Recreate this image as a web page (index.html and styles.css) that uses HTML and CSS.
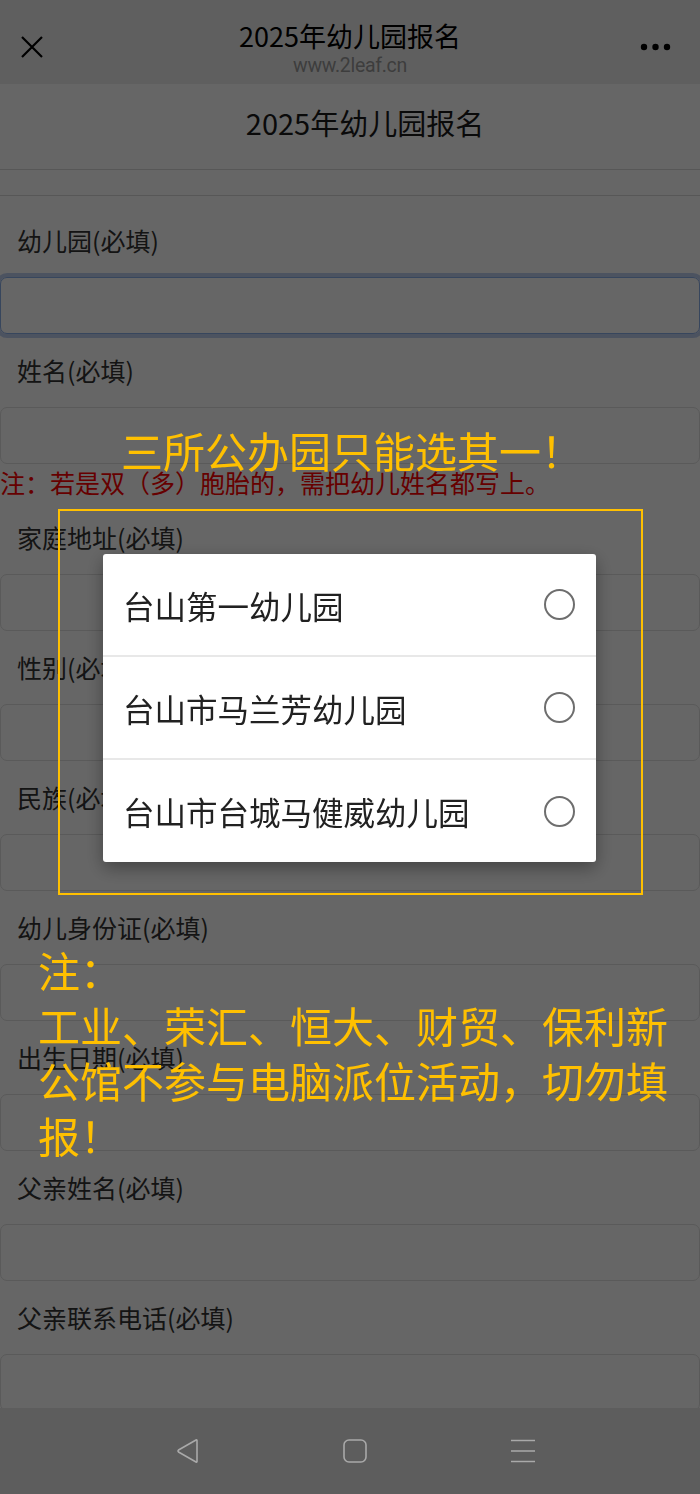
FILE: index.html
```html
<!DOCTYPE html>
<html lang="zh-CN">
<head>
    <meta charset="UTF-8">
    <meta name="viewport" content="width=device-width, initial-scale=1.0">
    <title>2025年幼儿园报名</title>
    <link rel="stylesheet" href="styles.css">
</head>
<body>
    <div class="topbar">
        <svg class="close-icon" width="24" height="24" viewBox="0 0 24 24">
            <path d="M2 2 L22 22 M22 2 L2 22" stroke="#000" stroke-width="2.2" fill="none"/>
        </svg>
        <div class="topbar-title">2025年幼儿园报名</div>
        <div class="topbar-url">www.2leaf.cn</div>
        <svg class="more-icon" width="32" height="8" viewBox="0 0 32 8">
            <circle cx="4" cy="4" r="3.2" fill="#000"/>
            <circle cx="15.5" cy="4" r="3.2" fill="#000"/>
            <circle cx="27" cy="4" r="3.2" fill="#000"/>
        </svg>
    </div>

    <div class="page-header">2025年幼儿园报名</div>
    <div class="header-gap"></div>

    <form class="signup-form">
        <div class="form-group">
            <label>幼儿园(必填)</label>
            <div class="input focused"></div>
        </div>
        <div class="form-group">
            <label>姓名(必填)</label>
            <div class="input"></div>
        </div>
        <p class="note">注：若是双（多）胞胎的，需把幼儿姓名都写上。</p>
        <div class="form-group">
            <label>家庭地址(必填)</label>
            <div class="input"></div>
        </div>
        <div class="form-group">
            <label>性别(必填)</label>
            <div class="input"></div>
        </div>
        <div class="form-group">
            <label>民族(必填)</label>
            <div class="input"></div>
        </div>
        <div class="form-group">
            <label>幼儿身份证(必填)</label>
            <div class="input"></div>
        </div>
        <div class="form-group">
            <label>出生日期(必填)</label>
            <div class="input"></div>
        </div>
        <div class="form-group">
            <label>父亲姓名(必填)</label>
            <div class="input"></div>
        </div>
        <div class="form-group">
            <label>父亲联系电话(必填)</label>
            <div class="input"></div>
        </div>
        <div class="form-group">
            <label>母亲姓名(必填)</label>
            <div class="input"></div>
        </div>
    </form>

    <!-- dimmed overlay with the picker dialog and the yellow annotations -->
    <div class="overlay">
        <div class="hint-top">三所公办园只能选其一！</div>
        <div class="hint-box"></div>
        <div class="dialog">
            <div class="option">
                <span>台山第一幼儿园</span>
                <span class="radio"></span>
            </div>
            <div class="option">
                <span>台山市马兰芳幼儿园</span>
                <span class="radio"></span>
            </div>
            <div class="option">
                <span>台山市台城马健威幼儿园</span>
                <span class="radio"></span>
            </div>
        </div>
        <div class="hint-bottom">注：<br>工业、荣汇、恒大、财贸、保利新公馆不参与电脑派位活动，切勿填报！</div>
    </div>

    <div class="navbar">
        <svg width="24" height="24" viewBox="0 0 24 24">
            <path d="M21 1.5 L21 22.5 Q21 23.5 20 23 L2.5 13 Q1.5 12 2.5 11 L20 1 Q21 0.5 21 1.5 Z" stroke="#a9a9a9" stroke-width="1.6" fill="none" stroke-linejoin="round"/>
        </svg>
        <svg width="24" height="24" viewBox="0 0 24 24">
            <rect x="1" y="1" width="22" height="22" rx="5" stroke="#a9a9a9" stroke-width="1.6" fill="none"/>
        </svg>
        <svg width="26" height="24" viewBox="0 0 26 24">
            <path d="M1 1.5 H25 M1 12 H25 M1 22.5 H25" stroke="#a9a9a9" stroke-width="1.6" fill="none"/>
        </svg>
    </div>
</body>
</html>
```

FILE: styles.css
```css
body {
    margin: 0;
    background: #ffffff;
    font-family: "Noto Sans CJK SC", "Noto Sans", sans-serif;
    color: #333333;
    overflow: hidden;
    height: 1494px;
}

.topbar {
    position: relative;
    background: #eeeeee;
    height: 84px;
    box-sizing: border-box;
    padding-top: 18px;
    text-align: center;
}

.topbar-title {
    font-size: 27px;
    line-height: 36px;
    color: #000000;
}

.topbar-url {
    font-family: Roboto, "Noto Sans", sans-serif;
    font-size: 19.5px;
    line-height: 24px;
    letter-spacing: -0.3px;
    color: #9a9a9a;
}

.close-icon {
    position: absolute;
    left: 20px;
    top: 35px;
}

.more-icon {
    position: absolute;
    left: 640px;
    top: 43px;
}

.page-header {
    font-size: 29px;
    line-height: 40px;
    padding: 18px 0 27px 30px;
    text-align: center;
    color: #1a1a1a;
    border-bottom: 1px solid #d9d9d9;
}

.header-gap {
    height: 25px;
    border-bottom: 1px solid #d9d9d9;
}

.signup-form {
    padding-top: 8px;
}

.form-group label {
    display: block;
    font-size: 25px;
    line-height: 37px;
    padding: 18px 17px;
    color: #333333;
}

.input {
    height: 57px;
    box-sizing: border-box;
    border: 1px solid #e0e0e0;
    border-radius: 7px;
}

.input.focused {
    border-color: #8aaee8;
    box-shadow: 0 0 0 4px rgba(138, 170, 230, 0.55);
}

.note {
    margin: 0;
    font-size: 25px;
    line-height: 37px;
    color: #ff0000;
}

.overlay {
    position: fixed;
    inset: 0;
    background: rgba(0, 0, 0, 0.6);
}

.hint-top {
    position: absolute;
    left: 121px;
    top: 422px;
    font-size: 42px;
    line-height: 56px;
    color: #ffc000;
}

.hint-box {
    position: absolute;
    left: 58px;
    top: 509px;
    width: 585px;
    height: 386px;
    box-sizing: border-box;
    border: 2px solid #ffc000;
}

.dialog {
    position: absolute;
    left: 103px;
    top: 554px;
    width: 493px;
    background: #ffffff;
    border-radius: 3px;
    box-shadow: 0 6px 18px rgba(0, 0, 0, 0.35);
}

.option {
    display: flex;
    align-items: center;
    justify-content: space-between;
    height: 103px;
    padding: 0 21px 0 20px;
    font-size: 31.5px;
    color: #212121;
    border-bottom: 2px solid #e8e8e8;
    box-sizing: border-box;
}

.option:last-child {
    border-bottom: none;
    height: 102px;
}

.radio {
    width: 31px;
    height: 31px;
    box-sizing: border-box;
    border: 2.8px solid #6e6e6e;
    border-radius: 50%;
}

.hint-bottom {
    position: absolute;
    left: 38px;
    top: 942px;
    width: 632px;
    font-size: 42px;
    line-height: 55px;
    color: #ffc000;
}

.navbar {
    position: fixed;
    left: 0;
    right: 0;
    bottom: 0;
    height: 86px;
    background: #5d5d5d;
    display: flex;
    align-items: center;
    gap: 143px;
    padding-left: 176px;
    box-sizing: border-box;
}
```
